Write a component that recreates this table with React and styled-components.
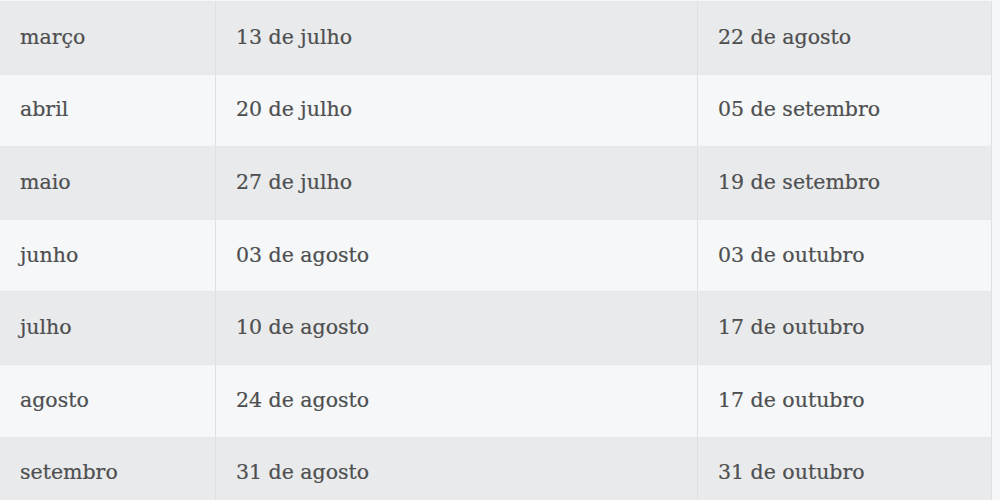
import styled, { createGlobalStyle } from "styled-components";

const GlobalStyle = createGlobalStyle`
  html, body {
    margin: 0;
    padding: 0;
    background: #f6f7f8;
  }
`;

const rows = [
  ["março", "13 de julho", "22 de agosto"],
  ["abril", "20 de julho", "05 de setembro"],
  ["maio", "27 de julho", "19 de setembro"],
  ["junho", "03 de agosto", "03 de outubro"],
  ["julho", "10 de agosto", "17 de outubro"],
  ["agosto", "24 de agosto", "17 de outubro"],
  ["setembro", "31 de agosto", "31 de outubro"],
];

function App() {
  return (
    <>
      <GlobalStyle />
      <Page>
        <Table>
          {rows.map((row, i) => (
            <Row key={i} $striped={i % 2 === 0}>
              {row.map((cell, j) => (
                <Cell key={j}>{cell}</Cell>
              ))}
            </Row>
          ))}
        </Table>
      </Page>
    </>
  );
}

const Page = styled.div`
  width: 1000px;
  height: 500px;
  overflow: hidden;
  padding-top: 1px;
  box-sizing: border-box;
`;

const Table = styled.div`
  width: 992px;
  display: flex;
  flex-direction: column;
`;

const Row = styled.div`
  display: grid;
  grid-template-columns: 216px 482px 294px;
  height: 72.6px;
  background: ${(p) => (p.$striped ? "#e9eaeb" : "#f5f7f8")};
  border-top: 1px solid #e6e7e8;
  box-sizing: border-box;
`;

const Cell = styled.div`
  display: flex;
  align-items: center;
  padding-left: 20px;
  padding-bottom: 2px;
  font-family: "DejaVu Serif", "Liberation Serif", serif;
  font-size: 20.5px;
  color: #4e4f50;
  -webkit-text-stroke: 0.2px #4e4f50;
  border-right: 1px solid #dfe0e1;
  box-sizing: border-box;
`;

export default App;
